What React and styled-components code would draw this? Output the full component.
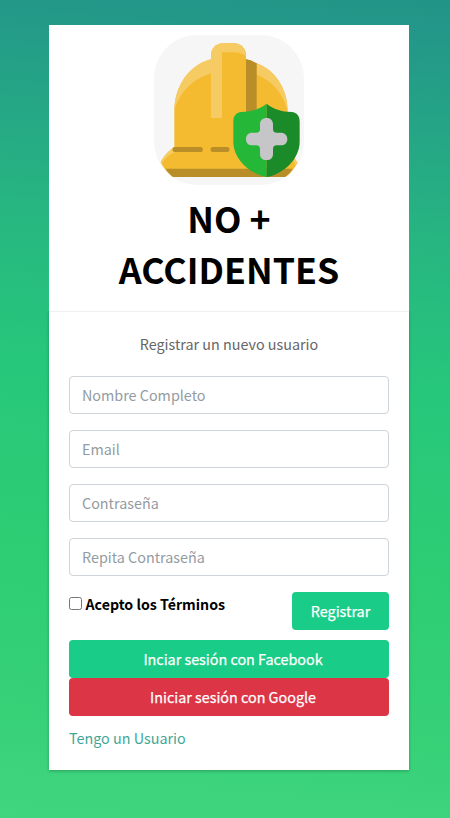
import React from 'react';
import styled, { createGlobalStyle } from 'styled-components';

const GlobalStyle = createGlobalStyle`
  *, *::before, *::after { box-sizing: border-box; }
  body {
    margin: 0;
    font-family: 'Noto Sans CJK SC', 'Open Sans', sans-serif;
    font-size: 14.35px;
    line-height: 24px;
    color: #000;
  }
`;

const Page = styled.main`
  min-height: 818px;
  padding-top: 25px;
  background: linear-gradient(185deg, #229487 0%, #239889 5%, #27b581 28%, #26c77b 46%, #2dcd74 67%, #35d077 85%, #40d57f 100%);
`;

const Card = styled.section`
  width: 360px;
  height: 745px;
  margin: 0 auto 0 49px;
  background: #fff;
`;

const Brand = styled.header`
  display: flex;
  flex-direction: column;
  align-items: center;
  height: 286px;
  padding-top: 10px;
`;

const Title = styled.h1`
  width: 300px;
  margin: 7px 0 0;
  font-size: 35.7px;
  font-weight: 700;
  line-height: 51px;
  text-align: center;
`;

const Body = styled.div`
  height: 459px;
  padding: 20px 20px 0;
  border-top: 1px solid #f0f0f0;
  box-shadow: 0 1px 3px rgba(0, 0, 0, 0.25);
  clip-path: inset(0 -5px -5px -5px);
`;

const Intro = styled.p`
  margin: 0 0 20px;
  color: #666;
  text-align: center;
`;

const Form = styled.form`
  display: flex;
  flex-direction: column;
`;

const Field = styled.input`
  width: 100%;
  height: 38px;
  margin: 0 0 16px;
  padding: 5px 12px 7px;
  border: 1px solid #ced4da;
  border-radius: 4px;
  background: #fff;
  font: inherit;
  color: #495057;
  &::placeholder { color: #939ba2; opacity: 1; }
`;

const SubmitRow = styled.div`
  display: flex;
  justify-content: space-between;
  align-items: flex-start;
  height: 48px;
`;

const Terms = styled.label`
  display: flex;
  align-items: center;
  gap: 3.5px;
  font-size: 14.2px;
  font-weight: 700;
`;

const Check = styled.input`
  width: 13px;
  height: 13px;
  margin: 0 0 2px;
`;

const Button = styled.button`
  width: ${({ $wide }) => ($wide ? '100%' : '97px')};
  height: 38px;
  padding: ${({ $wide }) => ($wide ? '0 0 0 8px' : '0')};
  border: 0;
  border-radius: 4px;
  background: ${({ $tone }) => ($tone === 'danger' ? '#dc3545' : '#19cc87')};
  color: #fff;
  font: inherit;
  -webkit-text-stroke: 0.25px #fff;
`;

const LoginLink = styled.a`
  display: block;
  margin-top: 10px;
  color: #3fa796;
  text-decoration: none;
`;

function Logo() {
  return (
    <svg width="150" height="150" viewBox="27 30 450 450" role="img" aria-label="Casco">
      <rect x="27" y="30" width="450" height="450" rx="130" fill="#f6f6f6" />
      <path d="M88 365V260C88 180 135 118 200 102H303L335 115C390 135 428 190 428 260V365L457 413C447 433 436 446 420 456H84C67 444 56 430 47 412C55 394 72 376 88 365Z" fill="#f4bb31" />
      <path d="M88 260C88 180 135 118 200 102V145C145 158 98 208 88 260ZM335 115C390 135 428 190 428 260C416 207 382 166 335 149Z" fill="#f7cb64" />
      <path d="M47 412C55 394 72 376 88 367L96 379C80 384 61 397 51 416ZM438 382L457 413L451 421Z" fill="#f7cb64" />
      <path d="M303 103C315 105 325 109 335 115V270H303Z" fill="#b98d28" />
      <path d="M198 279V91C198 70 213 55 234 55H267C288 55 303 70 303 91V279Z" fill="#f4bb31" />
      <path d="M198 279V91C198 70 213 55 234 55H267C288 55 301 70 302 94C292 85 280 82 266 82H231V279Z" fill="#f7cb64" />
      <path d="M62 431H443C436 443 429 450 420 456H84C75 449 68 441 62 431Z" fill="#b98d28" />
      <path d="M90 373.500H166M204 373.500H246" stroke="#b98d28" strokeWidth="15" strokeLinecap="round" />
      <path d="M365 236C345 252 320 260 289 261C273 263 265 273 265 290V350C265 403 316 447 365 456Z" fill="#25b737" />
      <path d="M365 236C385 252 409 260 440 261C456 263 464 273 464 290V350C464 403 414 447 365 456Z" fill="#1b8b29" />
      <path d="M365 279C377 279 384 287 384 298V313C384 320 388 323 395 323H407C419 323 427 331 427 342C427 354 419 361 407 361H395C388 361 384 365 384 372V386C384 398 377 405 365 405C352 405 345 398 345 386V372C345 365 341 361 334 361H322C310 361 303 354 303 342C303 331 310 323 322 323H334C341 323 345 320 345 313V298C345 287 352 279 365 279Z" fill="#c6c6c8" />
    </svg>
  );
}

const fields = [
  { label: 'Nombre Completo', type: 'text' },
  { label: 'Email', type: 'email' },
  { label: 'Contraseña', type: 'password' },
  { label: 'Repita Contraseña', type: 'password' },
];

export default function App() {
  return (
    <>
      <GlobalStyle />
      <Page>
        <Card>
          <Brand>
            <Logo />
            <Title>NO +<br />ACCIDENTES</Title>
          </Brand>
          <Body>
            <Intro>Registrar un nuevo usuario</Intro>
            <Form onSubmit={(e) => e.preventDefault()}>
              {fields.map(({ label, type }) => (
                <Field key={label} type={type} placeholder={label} aria-label={label} />
              ))}
              <SubmitRow>
                <Terms><Check type="checkbox" />Acepto los Términos</Terms>
                <Button type="submit">Registrar</Button>
              </SubmitRow>
              <Button type="button" $wide>Inciar sesión con Facebook</Button>
              <Button type="button" $wide $tone="danger">Iniciar sesión con Google</Button>
            </Form>
            <LoginLink href="#login">Tengo un Usuario</LoginLink>
          </Body>
        </Card>
      </Page>
    </>
  );
}
